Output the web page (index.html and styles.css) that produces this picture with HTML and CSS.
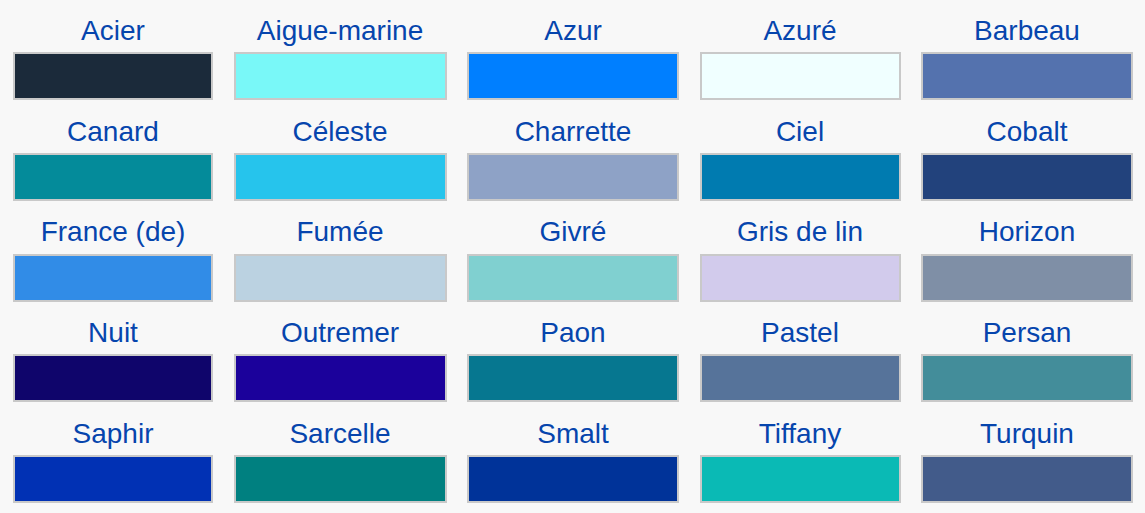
FILE: index.html
```html
<!DOCTYPE html>
<html lang="fr">
<head>
<meta charset="utf-8">
<title>Nuancier des bleus</title>
<link rel="stylesheet" href="styles.css">
</head>
<body>
<div class="palette">
  <div class="cell"><a class="name" href="#">Acier</a><div class="swatch" style="background:#1b2a3a"></div></div>
  <div class="cell"><a class="name" href="#">Aigue-marine</a><div class="swatch" style="background:#79f8f8"></div></div>
  <div class="cell"><a class="name" href="#">Azur</a><div class="swatch" style="background:#007fff"></div></div>
  <div class="cell"><a class="name" href="#">Azuré</a><div class="swatch" style="background:#f0ffff"></div></div>
  <div class="cell"><a class="name" href="#">Barbeau</a><div class="swatch" style="background:#5472ae"></div></div>

  <div class="cell"><a class="name" href="#">Canard</a><div class="swatch" style="background:#048b9a"></div></div>
  <div class="cell"><a class="name" href="#">Céleste</a><div class="swatch" style="background:#26c4ec"></div></div>
  <div class="cell"><a class="name" href="#">Charrette</a><div class="swatch" style="background:#8ea2c6"></div></div>
  <div class="cell"><a class="name" href="#">Ciel</a><div class="swatch" style="background:#007bb0"></div></div>
  <div class="cell"><a class="name" href="#">Cobalt</a><div class="swatch" style="background:#22427c"></div></div>

  <div class="cell"><a class="name" href="#">France (de)</a><div class="swatch" style="background:#318ce7"></div></div>
  <div class="cell"><a class="name" href="#">Fumée</a><div class="swatch" style="background:#bbd2e1"></div></div>
  <div class="cell"><a class="name" href="#">Givré</a><div class="swatch" style="background:#80d0d0"></div></div>
  <div class="cell"><a class="name" href="#">Gris de lin</a><div class="swatch" style="background:#d2cbec"></div></div>
  <div class="cell"><a class="name" href="#">Horizon</a><div class="swatch" style="background:#7f8fa6"></div></div>

  <div class="cell"><a class="name" href="#">Nuit</a><div class="swatch" style="background:#0f056b"></div></div>
  <div class="cell"><a class="name" href="#">Outremer</a><div class="swatch" style="background:#1b019b"></div></div>
  <div class="cell"><a class="name" href="#">Paon</a><div class="swatch" style="background:#067790"></div></div>
  <div class="cell"><a class="name" href="#">Pastel</a><div class="swatch" style="background:#56739a"></div></div>
  <div class="cell"><a class="name" href="#">Persan</a><div class="swatch" style="background:#438d9a"></div></div>

  <div class="cell"><a class="name" href="#">Saphir</a><div class="swatch" style="background:#0131b4"></div></div>
  <div class="cell"><a class="name" href="#">Sarcelle</a><div class="swatch" style="background:#008080"></div></div>
  <div class="cell"><a class="name" href="#">Smalt</a><div class="swatch" style="background:#003399"></div></div>
  <div class="cell"><a class="name" href="#">Tiffany</a><div class="swatch" style="background:#0abab5"></div></div>
  <div class="cell"><a class="name" href="#">Turquin</a><div class="swatch" style="background:#425b8a"></div></div>
</div>
</body>
</html>
```
FILE: styles.css
```css
html, body {
  margin: 0;
  padding: 0;
  background: #f8f8f8;
}

body {
  font-family: "Liberation Sans", Arial, sans-serif;
}

.palette {
  display: grid;
  grid-template-columns: 200px 213px 212px 201px 212px;
  column-gap: 20.5px;
  row-gap: 15.4px;
  padding: 15.3px 12px 0 13px;
}

.cell {
  display: flex;
  flex-direction: column;
  align-items: stretch;
}

.name {
  display: block;
  text-align: center;
  font-size: 28px;
  line-height: 32px;
  color: #0645ad;
  text-decoration: none;
  margin-bottom: 5.2px;
}

.swatch {
  height: 44px;
  border: 2px solid #c9c9c9;
}
```
